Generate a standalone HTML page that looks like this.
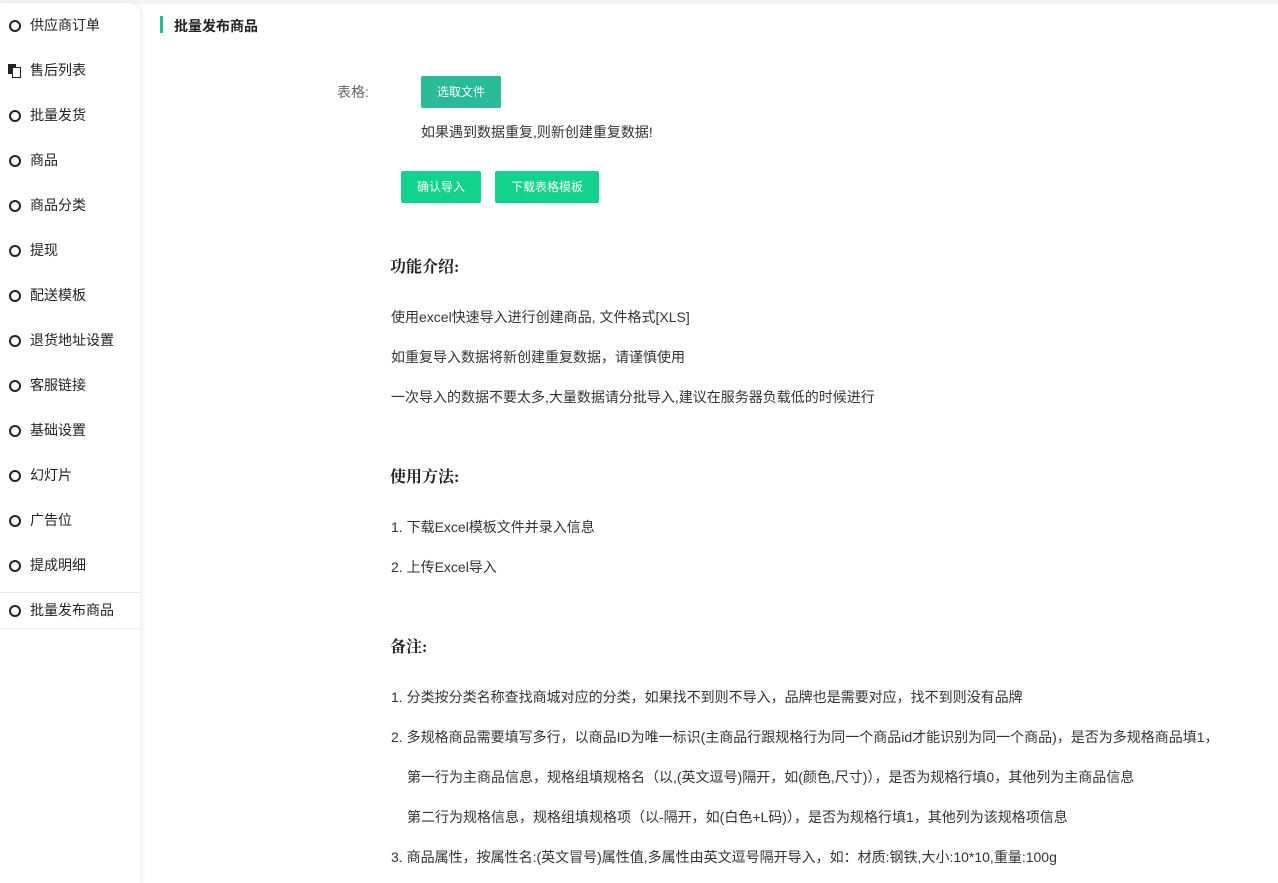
<!DOCTYPE html>
<html><head><meta charset="utf-8"><style>
body{margin:0;width:1278px;height:870px;overflow:hidden;background:#fff;font-family:"Liberation Sans","Noto Sans CJK SC",sans-serif;color:#333;position:relative}
.top{position:absolute;left:0;top:0;width:1278px;height:4px;background:#f3f3f3}
.side{position:absolute;left:0;top:3px;width:140px;height:880px;background:#fff;border-top-right-radius:12px;box-shadow:2px 0 6px rgba(0,0,0,.08)}
.it{position:absolute;left:0;width:140px;height:20px;font-size:14px;color:#222;line-height:20px}
.it i{position:absolute;left:9px;top:5px;width:8px;height:8px;border:2px solid #222;border-radius:50%}
.it span{position:absolute;left:30px}
.sel{border-top:1px solid #e8e8ee;border-bottom:1px solid #e8e8ee;height:35px;line-height:35px}
.sel i{top:12px}
.t{position:absolute;font-size:14px;color:#333;white-space:nowrap}
.h{position:absolute;font-family:"Liberation Serif","Noto Serif CJK SC",serif;font-weight:bold;font-size:16px;color:#222}
.btn{position:absolute;color:#fff;font-size:12px;text-align:center;border-radius:2px}
</style></head><body>
<div class="top"></div>
<div class="side">
<div class="it" style="top:12px"><i></i><span>供应商订单</span></div>
<div class="it" style="top:57px"><b style="position:absolute;left:8px;top:4px;width:8px;height:10px;background:#222"></b><b style="position:absolute;left:12px;top:7px;width:7px;height:9px;background:#fff;border:1px solid #222"></b><span>售后列表</span></div>
<div class="it" style="top:102px"><i></i><span>批量发货</span></div>
<div class="it" style="top:147px"><i></i><span>商品</span></div>
<div class="it" style="top:192px"><i></i><span>商品分类</span></div>
<div class="it" style="top:237px"><i></i><span>提现</span></div>
<div class="it" style="top:282px"><i></i><span>配送模板</span></div>
<div class="it" style="top:327px"><i></i><span>退货地址设置</span></div>
<div class="it" style="top:372px"><i></i><span>客服链接</span></div>
<div class="it" style="top:417px"><i></i><span>基础设置</span></div>
<div class="it" style="top:462px"><i></i><span>幻灯片</span></div>
<div class="it" style="top:507px"><i></i><span>广告位</span></div>
<div class="it" style="top:552px"><i></i><span>提成明细</span></div>
<div class="it sel" style="top:589px"><i></i><span>批量发布商品</span></div>
</div>
<div style="position:absolute;left:160px;top:16px;width:3px;height:17px;background:#27b896"></div>
<div class="t" style="left:174px;top:16px;font-weight:bold;color:#222">批量发布商品</div>
<div class="t" style="left:337px;top:82px;color:#666">表格:</div>
<div class="btn" style="left:421px;top:76px;width:80px;height:32px;line-height:32px;background:#29bb98">选取文件</div>
<div class="t" style="left:421px;top:122px">如果遇到数据重复,则新创建重复数据!</div>
<div class="btn" style="left:401px;top:171px;width:80px;height:32px;line-height:32px;background:#13d38c">确认导入</div>
<div class="btn" style="left:495px;top:171px;width:104px;height:32px;line-height:32px;background:#13d38c">下载表格模板</div>
<div class="h" style="left:390px;top:254px">功能介绍:</div>
<div class="t" style="left:391px;top:307px">使用excel快速导入进行创建商品, 文件格式[XLS]</div>
<div class="t" style="left:391px;top:347px">如重复导入数据将新创建重复数据，请谨慎使用</div>
<div class="t" style="left:391px;top:387px">一次导入的数据不要太多,大量数据请分批导入,建议在服务器负载低的时候进行</div>
<div class="h" style="left:390px;top:464px">使用方法:</div>
<div class="t" style="left:391px;top:517px">1. 下载Excel模板文件并录入信息</div>
<div class="t" style="left:391px;top:557px">2. 上传Excel导入</div>
<div class="h" style="left:390px;top:634px">备注:</div>
<div class="t" style="left:391px;top:687px">1. 分类按分类名称查找商城对应的分类，如果找不到则不导入，品牌也是需要对应，找不到则没有品牌</div>
<div class="t" style="left:391px;top:727px">2. 多规格商品需要填写多行，以商品ID为唯一标识(主商品行跟规格行为同一个商品id才能识别为同一个商品)，是否为多规格商品填1，</div>
<div class="t" style="left:407px;top:767px">第一行为主商品信息，规格组填规格名（以,(英文逗号)隔开，如(颜色,尺寸)），是否为规格行填0，其他列为主商品信息</div>
<div class="t" style="left:407px;top:807px">第二行为规格信息，规格组填规格项（以-隔开，如(白色+L码)），是否为规格行填1，其他列为该规格项信息</div>
<div class="t" style="left:391px;top:847px">3. 商品属性，按属性名:(英文冒号)属性值,多属性由英文逗号隔开导入，如：材质:钢铁,大小:10*10,重量:100g</div>
</body></html>
